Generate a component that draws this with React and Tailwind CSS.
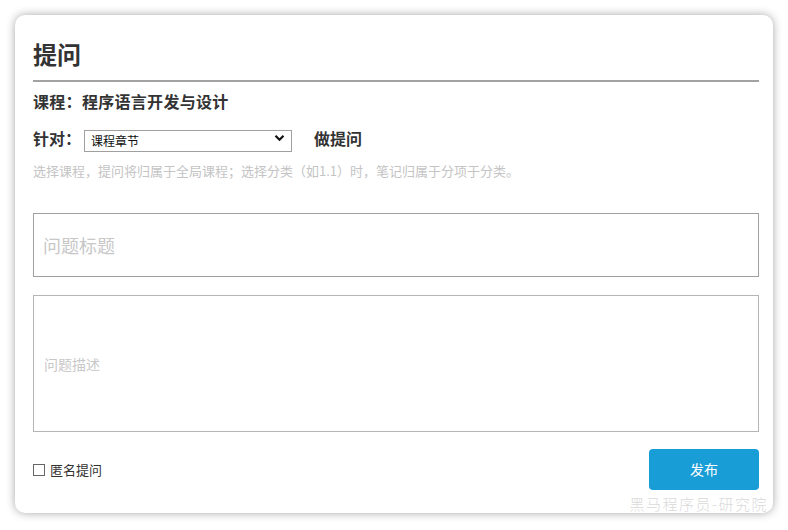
import React, { useState } from 'react';

function App() {
  const [target, setTarget] = useState('chapter');
  const [title, setTitle] = useState('');
  const [desc, setDesc] = useState('');
  const [anonymous, setAnonymous] = useState(false);

  return (
    <div className="min-h-screen bg-white p-[15px] font-['Noto_Sans_CJK_SC',sans-serif] text-[#333]">
      <div className="relative rounded-[10px] bg-white pt-[23px] pb-[23px] pl-[18px] pr-[14px] shadow-[0_0_10px_rgba(0,0,0,0.35)]">
        {/* Header */}
        <h1 className="text-[24px] font-bold leading-[32px] text-[#333]">提问</h1>
        <div className="mt-[10px] h-[2px] w-full bg-[#a3a3a3]" />

        <div className="mt-[7px] text-[16px] font-bold leading-[24px] tracking-[0.3px]">课程：程序语言开发与设计</div>

        {/* Target select */}
        <div className="mt-[14px] flex h-[22px] items-center">
          <span className="text-[16px] font-bold leading-[22px]">针对：</span>
          <div className="relative ml-[3px] h-[22px] w-[208px]">
            <select
              value={target}
              onChange={(e) => setTarget(e.target.value)}
              className="h-full w-full appearance-none rounded-none border border-[#a0a0a0] bg-white pl-[6px] text-[12px] leading-[20px] text-[#111] outline-none"
            >
              <option value="chapter">课程章节</option>
              <option value="course">全局课程</option>
            </select>
            <svg className="pointer-events-none absolute right-[7px] top-[7px]" width="11" height="8" viewBox="0 0 11 8">
              <path d="M1.5 1.8 L5.5 5.8 L9.5 1.8" fill="none" stroke="#111" strokeWidth="2.2" />
            </svg>
          </div>
          <span className="ml-[22px] text-[16px] font-bold leading-[22px]">做提问</span>
        </div>

        <p className="mt-[13px] text-[13px] leading-[18px] text-[#c4c4c4]">
          选择课程，提问将归属于全局课程；选择分类（如1.1）时，笔记归属于分项于分类。
        </p>

        {/* Title input */}
        <input
          value={title}
          onChange={(e) => setTitle(e.target.value)}
          placeholder="问题标题"
          className="mt-[33px] block h-[64px] w-full border border-[#a0a0a0] px-[9px] text-[18px] outline-none placeholder:text-[#c8c8c8]"
        />

        {/* Description */}
        <div className="mt-[18px] flex h-[137px] w-full items-center border border-[#b5b5b5] px-[10px]">
          <textarea
            value={desc}
            onChange={(e) => setDesc(e.target.value)}
            placeholder="问题描述"
            rows={1}
            className="w-full resize-none text-[14px] leading-[20px] outline-none placeholder:text-[#c8c8c8]"
          />
        </div>

        {/* Footer */}
        <div className="mt-[17px] flex items-center justify-between">
          <label className="flex cursor-pointer items-center text-[13px] leading-[18px] text-[#333]">
            <input
              type="checkbox"
              checked={anonymous}
              onChange={() => setAnonymous(!anonymous)}
              className="sr-only"
            />
            <span className="mr-[5px] flex h-[12px] w-[12px] items-center justify-center border border-[#666] bg-white">
              {anonymous && <span className="h-[6px] w-[6px] bg-[#333]" />}
            </span>
            匿名提问
          </label>
          <button className="h-[41px] w-[110px] rounded-[4px] bg-[#189dd6] text-[14px] text-white">发布</button>
        </div>

        {/* Watermark */}
        <div className="pointer-events-none absolute bottom-[0px] right-[5px] text-[15px] font-light leading-[18px] tracking-[1.5px] text-[#dadada]">
          黑马程序员-研究院
        </div>
      </div>
    </div>
  );
}

export default App;
